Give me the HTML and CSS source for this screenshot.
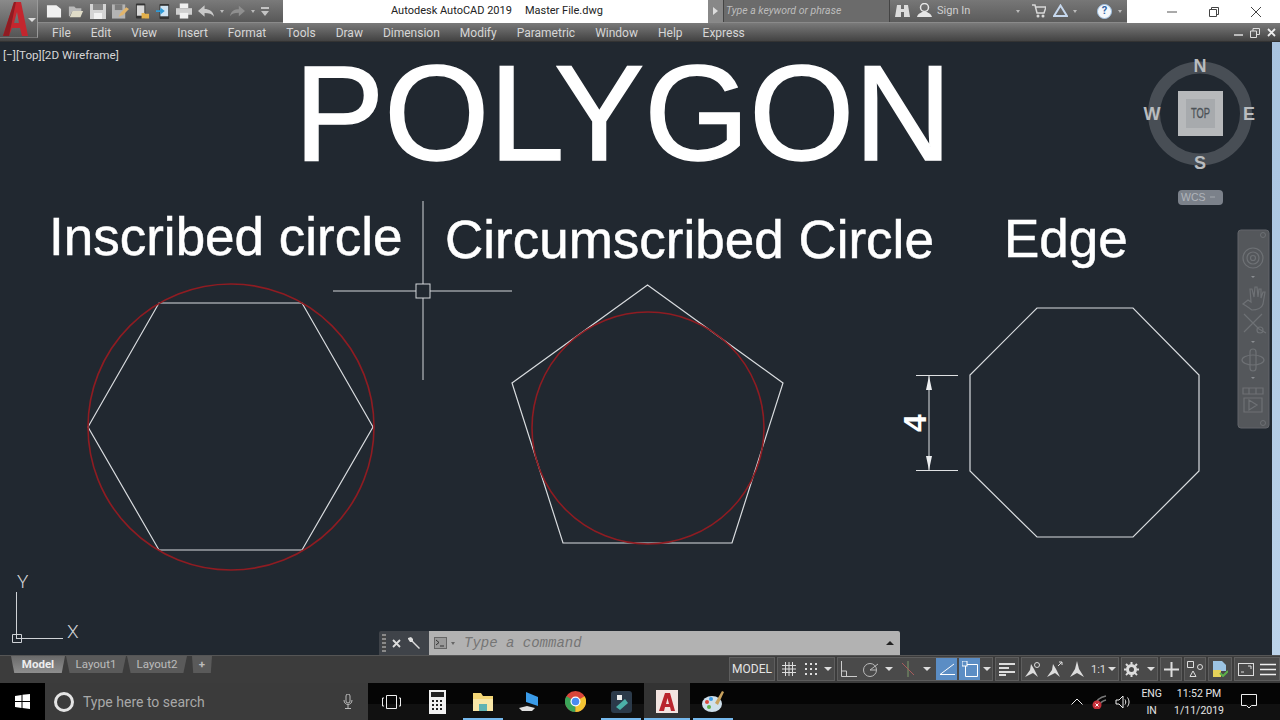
FILE: index.html
```html
<!DOCTYPE html>
<html lang="en">
<head>
  <meta charset="UTF-8"/>
  <title>Autodesk AutoCAD 2019 - Master File.dwg</title>
  <link rel="stylesheet" href="styles.css">
</head>
<body>
<div class="app">

  <!-- title bar -->
  <header class="titlebar">
    <div class="qat">
      <svg class="qi" width="16" height="16" viewBox="0 0 17 16"><path d="M1 2h10l5 4v9H1z" fill="#f1f1f1"/></svg>
      <svg class="qi" width="16" height="16" viewBox="0 0 18 16"><path d="M1 3h6l2 2h6v3H5l-3 6H1z" fill="#b9b9b9"/><path d="M5 8h12l-3 7H2z" fill="#e0dcc8"/></svg>
      <svg class="qi" width="16" height="16" viewBox="0 0 16 16"><path d="M0 1h16v15H0z" fill="#d4d4d4"/><path d="M3 1h10v6H3z" fill="#8a8a8a"/><path d="M4 10h8v6H4z" fill="#f1f1f1"/></svg>
      <svg class="qi" width="17" height="16" viewBox="0 0 18 16"><path d="M0 1h14v15H0z" fill="#b4b4b4"/><path d="M3 1h8v6H3z" fill="#7c7c7c"/><path d="M7 14l2-4 6-6 3 2-6 6z" fill="#e2b56c"/></svg>
      <svg class="qi" width="15" height="17" viewBox="0 0 16 17"><rect x="1" y="0" width="10" height="16" rx="1" fill="#333"/><rect x="2" y="2" width="8" height="11" fill="#d8d8d8"/><path d="M7 10h3l1 1h4v5H7z" fill="#e2b04c"/></svg>
      <svg class="qi" width="14" height="17" viewBox="0 0 16 17"><rect x="4" y="0" width="11" height="17" rx="1" fill="#333"/><rect x="5" y="2" width="9" height="12" fill="#cfe3f2"/><path d="M0 7h5V4l5 4-5 4V9H0z" fill="#2d9ad8"/></svg>
      <svg class="qi" width="16" height="16" viewBox="0 0 17 16"><path d="M4 0h9v5H4z" fill="#f1f1f1"/><path d="M0 5h17v7H0z" fill="#cfcfcf"/><path d="M4 10h9v6H4z" fill="#f1f1f1"/></svg>
      <svg class="qi" width="16" height="12" viewBox="0 0 17 12"><path d="M0 6l7-6v4c5 0 9 2 10 8-2-3-5-4-10-4v4z" fill="#c9c9c9"/></svg>
      <i class="dd dd-tiny"></i>
      <svg class="qi" width="15" height="12" viewBox="0 0 17 12"><path d="M17 6l-7-6v4C5 4 1 6 0 12c2-3 5-4 10-4v4z" fill="#8f8f8f"/></svg>
      <i class="dd dd-tiny"></i>
      <svg class="qi" width="8" height="9" viewBox="0 0 8 9"><path d="M0 0h8v2H0zM0 4h8L4 9z" fill="#c4c4c4"/></svg>
    </div>
    <div class="doc-title"><span>Autodesk AutoCAD 2019</span><span>Master File.dwg</span></div>
    <div class="search-group">
      <div class="search-arrow"><i></i></div>
      <div class="search-input">Type a keyword or phrase</div>
      <svg class="binoc" width="15" height="14" viewBox="0 0 15 14"><path d="M2 1h4v4h3V1h4l2 12H9V8H6v5H0z" fill="#dcdcdc"/></svg>
      <svg class="user" width="15" height="15" viewBox="0 0 15 15"><circle cx="7.500" cy="4.500" r="4" fill="none" stroke="#e6e6e6" stroke-width="1.500"/><path d="M0 14c1-4 4-4 5-5h5c1 1 4 1 5 5z" fill="#e6e6e6"/></svg>
      <span class="signin">Sign In</span>
      <i class="dd dd-tiny signin-dd"></i>
      <svg class="cart" width="14" height="14" viewBox="0 0 14 14"><path d="M0 1h3l2 8h7l2-6H4" fill="none" stroke="#d8d8d8" stroke-width="1.500"/><circle cx="6" cy="12" r="1.500" fill="#d8d8d8"/><circle cx="11" cy="12" r="1.500" fill="#d8d8d8"/></svg>
      <svg class="a360" width="15" height="13" viewBox="0 0 15 13"><path d="M7.500 1.500L14 12H1z" fill="none" stroke="#c6d8ee" stroke-width="2"/></svg>
      <i class="dd dd-tiny a360-dd"></i>
      <svg class="help" width="15" height="15" viewBox="0 0 15 15"><circle cx="7.500" cy="7.500" r="7" fill="#f4f8fc" stroke="#9fc0e2"/></svg>
      <span class="help-q">?</span>
      <i class="dd dd-tiny help-dd"></i>
    </div>
    <div class="winctl">
      <svg width="10" height="10" viewBox="0 0 10 10"><path d="M0 5h10" stroke="#555"/></svg>
      <svg width="10" height="10" viewBox="0 0 10 10"><path d="M.5 2.500h7v7h-7zM2.500 2.500v-2h7v7h-2" fill="none" stroke="#444"/></svg>
      <svg width="10" height="10" viewBox="0 0 10 10"><path d="M0 0l10 10M10 0L0 10" stroke="#444"/></svg>
    </div>
  </header>

  <!-- app button sits over title bar and menu bar -->
  <div class="app-btn">
    <svg width="25" height="34" viewBox="0 0 25 34"><path d="M0 34L11 0h7l7 34h-6l-2-8H9l-3 8zM11 21h5l-2-11z" fill="#c4262e" fill-rule="evenodd"/><path d="M0 34L11 0h2L6 34z" fill="#8f1c22"/></svg>
    <i class="dd"></i>
  </div>

  <nav class="menubar">
    <span>File</span><span>Edit</span><span>View</span><span>Insert</span><span>Format</span><span>Tools</span><span>Draw</span><span>Dimension</span><span>Modify</span><span>Parametric</span><span>Window</span><span>Help</span><span>Express</span>
    <div class="mdi">
      <svg width="9" height="9" viewBox="0 0 9 9"><path d="M0 7h9" stroke="#ddd" stroke-width="1.500"/></svg>
      <svg width="10" height="10" viewBox="0 0 10 10"><path d="M.5 3h6v6.500h-6zM3 3V.5h6.500v6H6.500" fill="none" stroke="#ddd"/></svg>
      <svg width="9" height="9" viewBox="0 0 9 9"><path d="M1 1l7 7M8 1L1 8" stroke="#eee" stroke-width="1.800"/></svg>
    </div>
  </nav>

  <!-- drawing area -->
  <div class="workspace">
    <main class="canvas">
      <div class="vp-label">[&minus;][Top][2D Wireframe]</div>
      <svg class="drawing" width="1272" height="613" viewBox="0 42 1272 613">
        <text class="t-big" x="623" y="160" text-anchor="middle">POLYGON</text>
        <text class="t-sub" x="49" y="255">Inscribed circle</text>
        <text class="t-sub" x="445" y="258">Circumscribed Circle</text>
        <text class="t-sub" x="1004" y="257">Edge</text>

        <polygon class="geo" points="88,427 159,303 302,303 373,427 302,550 159,550"/>
        <circle class="red" cx="231" cy="427" r="143"/>
        <polygon class="geo" points="647.500,285 783,383 732,543 563,543 512,383"/>
        <circle class="red" cx="648" cy="428" r="116"/>
        <polygon class="geo" points="1037,308 1133,308 1199,375 1199,471 1133,537 1037,537 970,471 970,375"/>

        <!-- dimension -->
        <path class="dim" d="M916 375.500h42M916 470.500h42M929 376v94"/>
        <path class="dim-fill" d="M929 376l-3 14h6zM929 470l-3-14h6z"/>
        <text class="t-dim" transform="translate(926 423) rotate(-90)" text-anchor="middle">4</text>

        <!-- crosshair -->
        <path class="cross" d="M333 291h83M430 291h82M423 201v83M423 298v82"/>
        <rect class="cross" x="416" y="284" width="14" height="14"/>

        <!-- ucs -->
        <path class="ucs" d="M16.500 592v46M16 638.500h47M12.500 634.500h9v8h-9z"/>
        <text class="t-ucs" x="17" y="588">Y</text>
        <text class="t-ucs" x="67" y="638">X</text>

        <!-- view cube -->
        <circle class="cube-ring" cx="1200" cy="113.500" r="46"/>
        <rect class="cube" x="1178" y="91" width="45" height="45"/>
        <rect class="cube-in" x="1186" y="99" width="29" height="29"/>
        <text class="t-top" x="1191" y="118" textLength="19" lengthAdjust="spacingAndGlyphs">TOP</text>
        <text class="t-cmp" x="1200" y="72" text-anchor="middle">N</text>
        <text class="t-cmp" x="1200" y="169" text-anchor="middle">S</text>
        <text class="t-cmp" x="1152" y="120" text-anchor="middle">W</text>
        <text class="t-cmp" x="1249" y="120" text-anchor="middle">E</text>
        <rect class="wcs" x="1178" y="190" width="45" height="15" rx="4"/>
        <text class="t-wcs" x="1181" y="201">WCS</text>
        <path class="wcs-arrow" d="M1210 197h5"/>

        <!-- navigation bar -->
        <rect class="navbar" x="1238" y="230" width="31" height="198" rx="3"/>
        <g class="nav-ic">
          <circle cx="1253" cy="258" r="10"/><circle cx="1253" cy="258" r="6"/><circle cx="1253" cy="258" r="2.500"/>
          <path d="M1243 304c4 2 6 4 9 6 5 0 10-2 11-6l2-12-2 0-2 6 0-9-2 0-1 8-1-10-2 0-1 10-2-8-2 0 1 13-3-2z"/>
          <path d="M1244 314l15 15M1262 314l-18 18M1259 329l7 4"/><circle cx="1260" cy="330" r="3"/>
          <ellipse cx="1253" cy="360" rx="11" ry="5"/><rect x="1250" y="349" width="6" height="22" rx="3"/>
          <path d="M1243 388h6v6h-6zM1249 388h7v6h-7zM1256 388h7v6h-7zM1244 398h18v14h-18zM1249 400l8 5-8 5z"/>
        </g>
        <path class="nav-dd" d="M1251 276h4l-2 2zM1251 341h4l-2 2zM1251 377h4l-2 2z"/>
        <circle class="nav-dot" cx="1263" cy="235" r="2.500"/>
        <circle class="nav-dot" cx="1263" cy="423" r="2.500"/>
      </svg>

      <div class="cmdline">
        <div class="cmd-tools">
          <i class="grip"></i>
          <svg width="9" height="9" viewBox="0 0 9 9"><path d="M1 1l7 7M8 1L1 8" stroke="#ddd" stroke-width="1.800"/></svg>
          <svg width="14" height="14" viewBox="0 0 14 14"><path d="M1 2l3-1 2 2v2l7 7-1 1-7-7H3L1 3z" fill="#ddd"/></svg>
        </div>
        <div class="cmd-input">
          <svg width="13" height="12" viewBox="0 0 13 12"><rect x=".5" y=".5" width="12" height="11" fill="#9a9a9a" stroke="#666"/><path d="M2 3l3 2.500L2 8M6 9h4" fill="none" stroke="#333"/></svg>
          <i class="dd dd-tiny cmd-dd"></i>
          <span class="cmd-text">Type a command</span>
          <i class="cmd-up"></i>
        </div>
      </div>
    </main>
    <div class="edge-strip"></div>
  </div>

  <!-- layout tabs and status bar -->
  <footer class="statusbar">
    <div class="tabs">
      <span class="tab active">Model</span>
      <span class="tab">Layout1</span>
      <span class="tab">Layout2</span>
      <span class="tab tab-plus">+</span>
    </div>
    <div class="sb">
      <div class="sg sg-model">MODEL</div>
      <div class="sg">
        <span class="si"><svg width="14" height="14" viewBox="0 0 14 14"><path d="M3.500 0v14M7 0v14M10.500 0v14M0 3.500h14M0 7h14M0 10.500h14" stroke="#ddd"/></svg></span>
        <span class="si"><svg width="12" height="12" viewBox="0 0 12 12"><path d="M0 1h12M0 6h12M0 11h12" stroke="#ddd" stroke-width="2" stroke-dasharray="2 3"/></svg></span>
        <i class="dd"></i>
      </div>
      <div class="sg sg-snap">
        <span class="si"><svg width="16" height="16" viewBox="0 0 16 16"><path d="M.5 0v15.500H16M.5 10h5v5.500" fill="none" stroke="#ccc"/></svg></span>
        <span class="si"><svg width="16" height="15" viewBox="0 0 16 15"><circle cx="7" cy="8" r="6.500" fill="none" stroke="#bbb"/><path d="M7 8l8-6M7 8h6" stroke="#bbb"/></svg></span>
        <i class="dd"></i>
        <span class="si si-wide"><svg width="14" height="16" viewBox="0 0 14 16"><path d="M7 0v16" stroke="#7c9a6a"/><path d="M1 2l12 12" stroke="#a85c5c"/></svg></span>
        <i class="dd"></i>
        <span class="si si-on"><svg width="16" height="12" viewBox="0 0 16 12"><path d="M15 1L1 11.500h15" fill="none" stroke="#fff"/></svg></span>
        <span class="si si-on"><svg width="16" height="16" viewBox="0 0 16 16"><path d="M2.500 3.500h13v12h-12v-12" fill="none" stroke="#fff"/><rect x="0" y="0" width="5" height="5" fill="#5b8dc4" stroke="#fff"/></svg></span>
        <i class="dd"></i>
      </div>
      <div class="sg">
        <span class="si"><svg width="16" height="13" viewBox="0 0 16 13"><path d="M0 1h16M0 5h10M0 9h16M0 12h7" stroke="#ddd" stroke-width="2"/></svg></span>
      </div>
      <div class="sg">
        <span class="si"><svg width="16" height="16" viewBox="0 0 16 16"><path d="M0 16l5-7 1-6 3 5 4 8-5-4z" fill="#ddd"/><circle cx="12" cy="4" r="2.500" fill="none" stroke="#ddd"/></svg></span>
        <span class="si"><svg width="16" height="16" viewBox="0 0 16 16"><path d="M0 16l5-7 1-6 3 5 4 8-5-4z" fill="#ddd"/><path d="M11 5l4-4M12 1h3v3" fill="none" stroke="#ddd"/></svg></span>
        <span class="si"><svg width="14" height="16" viewBox="0 0 14 16"><path d="M0 16l5-8 2-8 2 8 5 8-7-4z" fill="#ddd"/></svg></span>
        <span class="si-text">1:1</span>
        <i class="dd"></i>
      </div>
      <div class="sg sg-gear">
        <span class="si"><svg width="15" height="15" viewBox="0 0 15 15"><circle cx="7.500" cy="7.500" r="4" fill="none" stroke="#ddd" stroke-width="3"/><path d="M7.500 0v15M0 7.500h15M2 2l11 11M13 2L2 13" stroke="#ddd" stroke-width="2" stroke-dasharray="2.500 10 2.500 0"/></svg></span>
        <i class="dd"></i>
      </div>
      <div class="sg sg-tight"><span class="si"><svg width="15" height="15" viewBox="0 0 15 15"><path d="M7.500 0v15M0 7.500h15" stroke="#ddd" stroke-width="2"/></svg></span></div>
      <div class="sg sg-tight"><span class="si"><svg width="16" height="16" viewBox="0 0 16 16"><path d="M.5.5h6v6h-6z" fill="none" stroke="#ddd"/><circle cx="13" cy="6" r="2.500" fill="none" stroke="#ddd"/><path d="M6 10l3 5.500H3z" fill="none" stroke="#ddd"/></svg></span></div>
      <div class="sg"><span class="si"><svg width="16" height="16" viewBox="0 0 16 16"><path d="M1 0h9l4 4v6H1z" fill="#9cc4e4"/><path d="M1 9h8v7H1z" fill="#e6d25a"/><path d="M8 12l3 3 5-5" fill="none" stroke="#5db04a" stroke-width="2"/></svg></span></div>
      <div class="sg sg-last">
        <span class="si"><svg width="16" height="13" viewBox="0 0 16 13"><rect x=".5" y=".5" width="15" height="12" fill="none" stroke="#ddd"/><path d="M3 9h3M10 3l3 0v3" fill="none" stroke="#ddd"/></svg></span>
        <span class="si"><svg width="16" height="13" viewBox="0 0 16 13"><path d="M0 1.500h16M0 6.500h16M0 11.500h16" stroke="#eee" stroke-width="1.600"/></svg></span>
      </div>
    </div>
  </footer>

  <!-- windows taskbar -->
  <div class="taskbar">
    <div class="start"><svg width="15" height="15" viewBox="0 0 15 15"><path d="M0 2l6.500-1v6H0zM7.500 .8L15 0v7H7.500zM0 8h6.500v6L0 13zM7.500 8H15v7l-7.500-1z" fill="#fff"/></svg></div>
    <div class="tsearch">
      <i class="cortana"></i>
      <span>Type here to search</span>
      <svg class="mic" width="10" height="15" viewBox="0 0 10 15"><rect x="3" y="0" width="4" height="9" rx="2" fill="none" stroke="#bbb"/><path d="M1 6c0 6 8 6 8 0M5 11v4M2 14.500h6" fill="none" stroke="#bbb"/></svg>
    </div>
    <div class="slot"><svg width="19" height="14" viewBox="0 0 19 14"><path d="M4.500.5h10v13h-10zM2 3H.5v8H2M17 3h1.500v8H17" fill="none" stroke="#eee"/></svg></div>
    <div class="slot"><svg width="17" height="24" viewBox="0 0 17 24"><rect width="17" height="24" fill="#f2f2f2"/><rect x="2" y="2" width="13" height="5" fill="#222"/><path d="M3 10h2v2H3zM7 10h2v2H7zM11 10h2v2h-2zM3 14h2v2H3zM7 14h2v2H7zM11 14h2v2h-2zM3 18h2v2H3zM7 18h2v2H7zM11 18h2v2h-2z" fill="#222"/></svg></div>
    <div class="slot open"><svg width="20" height="18" viewBox="0 0 20 18"><path d="M0 0h8l2 3h10v15H0z" fill="#f4d676"/><path d="M0 6h20v12H0z" fill="#f8e7a8"/><path d="M6 11h8v7H6z" fill="#5fb3b3"/></svg></div>
    <div class="slot"><svg width="20" height="20" viewBox="0 0 20 20"><path d="M7 0l12 5v9L7 10z" fill="#3a9be8"/><path d="M0 16l8-2 8 2-3 3H3z" fill="#ddd"/></svg></div>
    <div class="slot"><svg width="21" height="21" viewBox="0 0 21 21"><circle cx="10.500" cy="10.500" r="10.500" fill="#d9453a"/><path d="M10.500 10.500L1.400 5.200A10.500 10.500 0 0 0 10.500 21z" fill="#3ba458"/><path d="M10.500 10.500V21A10.500 10.500 0 0 0 19.600 5.200z" fill="#f3c432"/><circle cx="10.500" cy="10.500" r="5" fill="#fff"/><circle cx="10.500" cy="10.500" r="3.800" fill="#4a8af0"/></svg></div>
    <div class="slot open"><svg width="21" height="22" viewBox="0 0 21 22"><rect width="21" height="22" rx="3" fill="#2b3a4a"/><path d="M6 4l5 0 0 5-5 0z" fill="#eee"/><path d="M5 16l9-8 3 4-8 7z" fill="#4bb0a8"/></svg></div>
    <div class="slot open active"><svg width="22" height="23" viewBox="0 0 22 23"><rect width="22" height="23" fill="#f3e4e0"/><path d="M3 21L9 3h5l5 18h-4l-1-4H9l-1 4zM10 14h3l-1.500-6z" fill="#b9252d" fill-rule="evenodd"/></svg></div>
    <div class="slot open"><svg width="22" height="22" viewBox="0 0 22 22"><ellipse cx="10" cy="13" rx="10" ry="8" fill="#cfe0ec"/><circle cx="5" cy="11" r="2" fill="#d9453a"/><circle cx="9" cy="8" r="2" fill="#3a9be8"/><circle cx="7" cy="16" r="2" fill="#5db04a"/><path d="M13 12L20 0l2 1-6 13z" fill="#c9a25e"/></svg></div>
    <div class="tray">
      <svg width="12" height="7" viewBox="0 0 12 7"><path d="M.5 6.500L6 1l5.500 5.500" fill="none" stroke="#eee"/></svg>
      <svg class="net" width="15" height="15" viewBox="0 0 15 15"><path d="M3 12C4 7 8 3 14 2M7 12c1-3 3-5 7-6" fill="none" stroke="#777" stroke-width="1.500"/><circle cx="5" cy="11" r="4.500" fill="#c6303a"/><path d="M3.500 9.500l3 3M6.500 9.500l-3 3" stroke="#fff"/></svg>
      <svg class="spk" width="16" height="14" viewBox="0 0 16 14"><path d="M1 5h3l4-4v12L4 9H1z" fill="none" stroke="#eee"/><path d="M10 4.500c1 1.500 1 3.500 0 5M12.500 2.500c2 3 2 6 0 9" fill="none" stroke="#eee"/></svg>
      <div class="lang"><span>ENG</span><span>IN</span></div>
      <div class="clock"><span>11:52 PM</span><span>1/11/2019</span></div>
      <svg class="notif" width="16" height="15" viewBox="0 0 16 15"><path d="M.5.500h15v11h-5L8 14l-2.500-2.500h-5z" fill="none" stroke="#eee"/></svg>
    </div>
  </div>
</div>
</body>
</html>
```
FILE: styles.css
```css
* {
  box-sizing: border-box;
}

body {
  margin: 0;
  background: #212830;
  font-family: Roboto, 'Noto Sans', sans-serif;
  color: #ddd;
  overflow: hidden;
}

.app {
  position: relative;
  width: 1280px;
  height: 720px;
  display: flex;
  flex-direction: column;
}

/* title bar */
.titlebar {
  height: 23px;
  display: flex;
  background: #fff;
}

.qat {
  width: 283px;
  display: flex;
  align-items: center;
  gap: 6px;
  padding-left: 46px;
  background: linear-gradient(to bottom, #7a7a7a, #585858);
  border-bottom: 1px solid #8a8a8a;
}

.doc-title {
  width: 425px;
  display: flex;
  gap: 13px;
  padding: 3px 0 0 108px;
  font-size: 11px;
  line-height: 16px;
  color: #222;
  white-space: nowrap;
}

.search-group {
  position: relative;
  width: 419px;
  background: linear-gradient(to bottom, #777, #5b5b5b);
  border-bottom: 1px solid #8a8a8a;
}

.search-arrow {
  position: absolute;
  left: 0;
  top: 0;
  width: 15px;
  height: 22px;
  background: #888;
  padding: 7px 0 0 5px;
}

.search-arrow i {
  display: block;
  width: 0;
  height: 0;
  border-left: 5px solid #ddd;
  border-top: 4px solid transparent;
  border-bottom: 4px solid transparent;
}

.search-input {
  position: absolute;
  left: 15px;
  top: 0;
  width: 167px;
  height: 22px;
  background: #6b6b6b;
  border-left: 1px solid #444;
  border-right: 1px solid #444;
  padding-left: 2px;
  font-size: 10.5px;
  font-style: italic;
  line-height: 22px;
  color: #bdbdbd;
  white-space: nowrap;
}

.binoc { position: absolute; left: 187px; top: 4px; }
.user { position: absolute; left: 209px; top: 3px; }
.signin { position: absolute; left: 229px; top: 3px; font-size: 11px; line-height: 16px; color: #cfcfcf; }
.signin-dd { position: absolute; left: 308px; top: 10px; }
.cart { position: absolute; left: 324px; top: 4px; }
.a360 { position: absolute; left: 345px; top: 4px; }
.a360-dd { position: absolute; left: 365px; top: 10px; }
.help { position: absolute; left: 389px; top: 4px; }
.help-q { position: absolute; left: 389px; width: 15px; top: 3px; text-align: center; font-size: 11px; font-weight: bold; line-height: 16px; color: #3266a8; }
.help-dd { position: absolute; left: 410px; top: 10px; }

.winctl {
  flex: 1;
  display: flex;
  align-items: center;
  gap: 32px;
  padding-left: 40px;
}

.app-btn {
  position: absolute;
  left: 0;
  top: 0;
  width: 38px;
  height: 38px;
  background: linear-gradient(to bottom, #8a8a8a, #555);
  border-right: 1px solid #9a9a9a;
  border-bottom: 1px solid #777;
  padding: 2px 0 0 3px;
}

.app-btn .dd {
  position: absolute;
  left: 28px;
  top: 18px;
}

.dd {
  display: inline-block;
  flex: none;
  width: 0;
  height: 0;
  border-top: 4px solid #ddd;
  border-left: 4px solid transparent;
  border-right: 4px solid transparent;
}

.dd-tiny {
  border-top-width: 3px;
  border-left-width: 2px;
  border-right-width: 2px;
  border-top-color: #bbb;
}

/* menu bar */
.menubar {
  height: 19px;
  display: flex;
  align-items: center;
  gap: 20px;
  padding-left: 52px;
  background: linear-gradient(to bottom, #7a7a7a, #3f3f3f);
  font-size: 12px;
  color: #d6d6d6;
  box-shadow: inset 0 -1px 0 #333;
}

.mdi {
  margin-left: auto;
  display: flex;
  align-items: center;
  gap: 7px;
  padding-right: 4px;
}

/* drawing area */
.workspace {
  height: 613px;
  display: flex;
}

.canvas {
  position: relative;
  width: 1272px;
  background: #212830;
}

.edge-strip {
  flex: 1;
  background: linear-gradient(to bottom, #a9c4e0, #bcd3ea);
}

.drawing {
  display: block;
  overflow: visible;
}

.vp-label {
  position: absolute;
  left: 3px;
  top: 5px;
  font-size: 11.7px;
  line-height: 16px;
  color: #d6d6d6;
}

.t-big, .t-sub, .t-dim {
  font-family: 'Liberation Sans', sans-serif;
  fill: #fff;
  stroke: #fff;
}

.t-big { font-size: 135px; stroke-width: 1.500px; }
.t-sub { font-size: 53px; stroke-width: .5px; }
.t-dim { font-size: 32px; font-weight: bold; stroke-width: 0; }
.t-ucs { font-family: Roboto, sans-serif; font-weight: 300; font-size: 19px; fill: #cfd2d6; }

.geo { fill: none; stroke: #d9dcdf; stroke-width: 1.200; }
.red { fill: none; stroke: #8f1c22; stroke-width: 1.600; }
.dim { fill: none; stroke: #dfe1e3; stroke-width: 1; }
.dim-fill { fill: #eceef0; }
.cross { fill: none; stroke: #d4d6d9; stroke-width: 1; }
.ucs { fill: none; stroke: #cfd2d6; stroke-width: 1; }

.cube-ring { fill: none; stroke: #484e55; stroke-width: 12; }
.cube { fill: #b7b9bb; }
.cube-in { fill: #a7aaad; }
.t-top { font-family: 'Liberation Sans', sans-serif; font-size: 14px; fill: #4c5257; stroke: #4c5257; stroke-width: .3px; }
.t-cmp { font-family: 'Liberation Sans', sans-serif; font-size: 18px; font-weight: bold; fill: #b9bcbf; }
.wcs { fill: #7b818a; }
.t-wcs { font-family: 'Liberation Sans', sans-serif; font-size: 10.500px; fill: #b0b4ba; }
.wcs-arrow { stroke: #a5a9af; stroke-width: 1; }

.navbar { fill: #54575b; stroke: #62656a; }
.nav-ic { fill: none; stroke: #6e7175; stroke-width: 1.200; }
.nav-dd { fill: #8a8d91; }
.nav-dot { fill: none; stroke: #6c6f73; }

/* command line */
.cmdline {
  position: absolute;
  left: 379px;
  bottom: 0;
  width: 521px;
  height: 24px;
  display: flex;
}

.cmd-tools {
  width: 50px;
  display: flex;
  align-items: center;
  gap: 6px;
  padding-left: 3px;
  background: #3f4349;
  border-radius: 2px 0 0 0;
}

.grip {
  width: 4px;
  height: 18px;
  background: repeating-linear-gradient(to bottom, #8a8a8a 0 2px, #444 2px 4px);
}

.cmd-input {
  flex: 1;
  display: flex;
  align-items: center;
  padding-left: 5px;
  background: #b2b2b2;
  border-radius: 0 2px 0 0;
}

.cmd-dd {
  margin-left: 4px;
  border-top-color: #666;
}

.cmd-text {
  margin-left: 9px;
  font-family: 'Liberation Mono', monospace;
  font-size: 14px;
  font-style: italic;
  color: #757575;
}

.cmd-up {
  margin-left: auto;
  margin-right: 6px;
  width: 0;
  height: 0;
  border-bottom: 4px solid #222;
  border-left: 4px solid transparent;
  border-right: 4px solid transparent;
}

/* tabs + status */
.statusbar {
  height: 28px;
  display: flex;
  justify-content: space-between;
  background: #3c3c3c;
  border-top: 1px solid #555;
}

.tabs {
  display: flex;
  align-items: flex-start;
  padding-left: 11px;
}

.tab {
  width: 60px;
  height: 17px;
  margin-right: 1px;
  background: #5a5a5a;
  font-size: 11.5px;
  line-height: 16px;
  text-align: center;
  color: #bcbcbc;
  clip-path: polygon(0 0, 100% 0, 94% 100%, 6% 100%);
}

.tab.active {
  width: 54px;
  background: linear-gradient(to bottom, #6a6a6a, #8e8e8e);
  font-weight: bold;
  color: #eee;
}

.tab-plus {
  width: 20px;
  margin-left: 4px;
  font-weight: bold;
}

.sb {
  display: flex;
  gap: 2px;
  padding-top: 1px;
  height: 26px;
}

.sg {
  height: 24px;
  display: flex;
  align-items: center;
  background: #4a4a4a;
  border: 1px solid #5e5e5e;
}

.sg-model {
  width: 46px;
  justify-content: center;
  font-size: 12px;
  color: #e4e4e4;
}

.si {
  width: 22px;
  height: 22px;
  display: flex;
  align-items: center;
  justify-content: center;
}

.si-wide {
  width: 24px;
}

.si-on {
  width: 21px;
  margin-left: 2px;
  background: #5b8dc4;
}

.si-text {
  width: 18px;
  font-size: 11px;
  text-align: right;
  color: #ddd;
}

.sg .dd {
  margin: 0 2px;
}

.sg-snap .dd {
  margin: 0 3px;
}

.sg-snap .dd:last-child {
  margin-right: 1px;
}

.sg-gear .si {
  width: 18px;
}

.sg-gear .dd {
  margin: 0 2px 0 7px;
}

.sg-tight .si {
  width: 20px;
}

/* taskbar */
.taskbar {
  flex: 1;
  display: flex;
  align-items: stretch;
  background: linear-gradient(to bottom, #050505 0 21px, #111 21px);
}

.start {
  width: 45px;
  display: flex;
  align-items: center;
  justify-content: center;
  background: #000;
}

.tsearch {
  width: 323px;
  display: flex;
  align-items: center;
  padding-left: 9px;
  background: #3b3b3b;
  font-size: 14px;
  color: #a8a8a8;
}

.cortana {
  width: 20px;
  height: 20px;
  margin-right: 9px;
  border: 3px solid #e4e4e4;
  border-radius: 50%;
}

.mic {
  margin-left: auto;
  margin-right: 15px;
}

.slot {
  position: relative;
  width: 46px;
  display: flex;
  align-items: center;
  justify-content: center;
}

.slot.active {
  background: #333;
}

.slot.open::after {
  content: "";
  position: absolute;
  left: 3px;
  right: 3px;
  bottom: 0;
  height: 2px;
  background: #76b9ed;
}

.slot.active::after {
  left: 0;
  right: 0;
}

.tray {
  margin-left: auto;
  display: flex;
  align-items: center;
  padding-right: 23px;
  font-size: 10.5px;
  color: #e4e4e4;
}

.net { margin-left: 9px; }
.spk { margin-left: 8px; }

.lang, .clock {
  display: flex;
  flex-direction: column;
  align-items: center;
  line-height: 17px;
}

.lang { margin-left: 10px; }
.clock { margin-left: 12px; }
.notif { margin-left: 17px; }
```
